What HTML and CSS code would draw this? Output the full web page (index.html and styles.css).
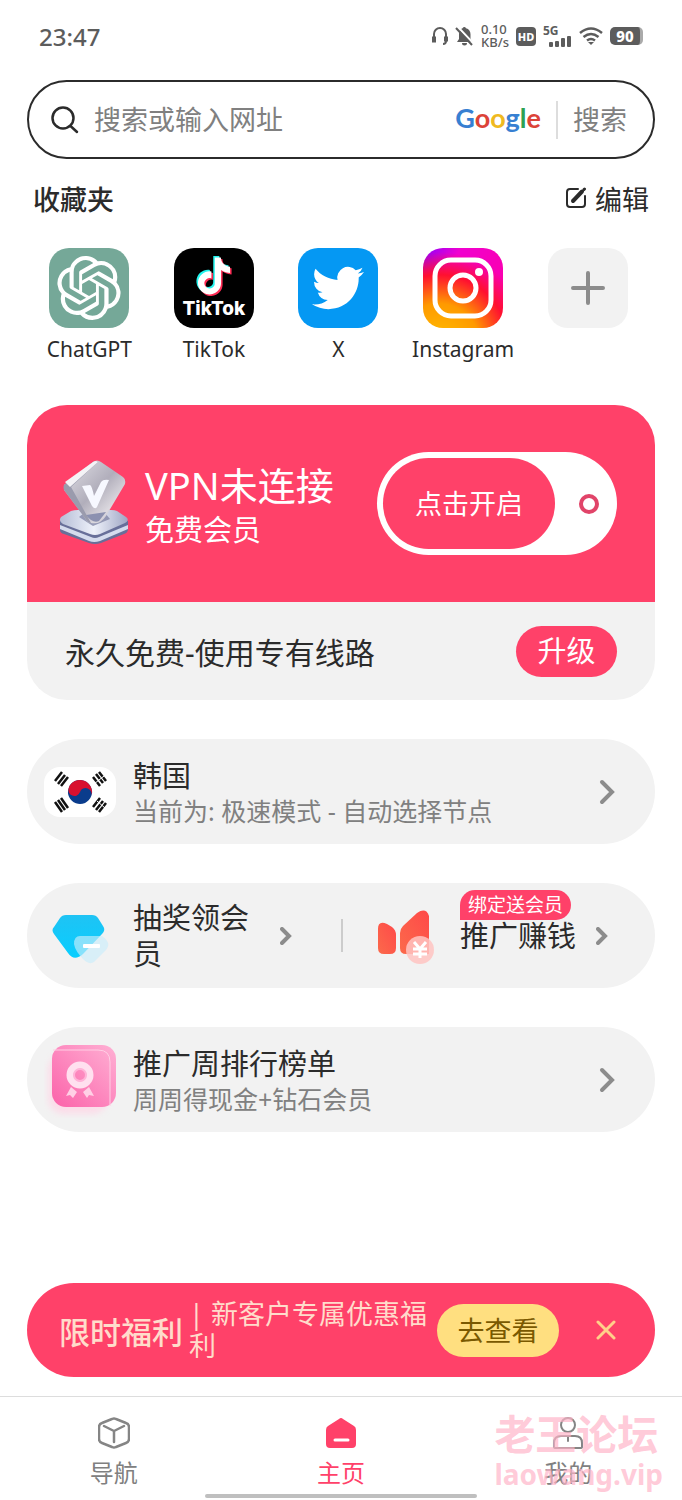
FILE: index.html
```
<!DOCTYPE html>
<html lang="zh-CN">
<head>
    <meta charset="utf-8" />
    <meta name="viewport" content="width=device-width, initial-scale=1" />
    <title>主页</title>
    <link rel="stylesheet" href="styles.css">
</head>
<body>
    <header class="status">
        <span class="clock">23:47</span>
        <div class="status-icons">
            <svg width="16" height="20" viewBox="0 0 16 20" fill="none" stroke="#5c5c5c" stroke-width="2">
                <path d="M2 15V8a6 6 0 0 1 12 0v7q0 3-3 3" />
                <path d="M2 10.500v6M14 10.500v5" stroke-width="4" />
            </svg>
            <svg width="19" height="20" viewBox="0 0 19 20">
                <path d="M9 1a2 2 0 0 1 2 1.200c3 .8 4.500 3 4.500 6V13l2 3H2l2-3V8c0-3 1.500-5 3.500-5.800A2 2 0 0 1 9 1zM7 17h5a2.500 2.500 0 0 1-5 0z" fill="#5c5c5c" />
                <path d="M3 1l16 17" stroke="#fff" stroke-width="2" />
                <path d="M1 2l16 17" stroke="#5c5c5c" stroke-width="2" />
            </svg>
            <div class="speed"><span>0.10</span><span>KB/s</span></div>
            <span class="hd">HD</span>
            <div class="signal">
                <span>5G</span>
                <svg width="24" height="12" viewBox="0 0 24 12" fill="#5c5c5c">
                    <rect x="1" y="7" width="4" height="5" rx="1" /><rect x="7" y="6" width="4" height="6" rx="1" />
                    <rect x="13" y="3" width="4" height="9" rx="1" /><rect x="19" y="1" width="4" height="11" rx="1" />
                </svg>
            </div>
            <svg width="24" height="20" viewBox="0 0 24 20" fill="none" stroke="#5c5c5c" stroke-width="2.500">
                <path d="M1 7q11-9 22 0M4.500 11q7.500-6 15 0M8 14.500q4-3 8 0" />
                <path d="M9 16h6l-3 3z" fill="#5c5c5c" stroke="none" />
            </svg>
            <div class="battery"><span>90</span></div>
        </div>
    </header>

    <main class="page">
        <form class="search">
            <svg width="28" height="28" viewBox="0 0 28 28" fill="none" stroke="#2b2b2b" stroke-width="2.500" stroke-linecap="round">
                <circle cx="12" cy="12" r="10.500" /><path d="M19.500 20l6.500 6" />
            </svg>
            <input type="text" aria-label="搜索" placeholder="搜索或输入网址" />
            <span class="google"><b class="blue">G</b><b class="red">o</b><b class="yellow">o</b><b class="blue">g</b><b class="green">l</b><b class="red">e</b></span>
            <button type="button" class="search-btn">搜索</button>
        </form>

        <section class="fav">
            <div class="fav-head">
                <h2>收藏夹</h2>
                <button type="button" class="edit">
                    <svg width="22" height="22" viewBox="0 0 22 22" fill="none" stroke="#2b2b2b" stroke-width="2" stroke-linecap="round">
                        <path d="M13 2H5a3 3 0 0 0-3 3v12a3 3 0 0 0 3 3h12a3 3 0 0 0 3-3V9" />
                        <path d="M8 14l9-9.500" stroke-width="4" /><path d="M19 2.500l.5-.5" stroke-width="3" />
                    </svg>
                    编辑
                </button>
            </div>
            <div class="fav-list">
                <a href="#" class="app">
                    <span class="app-icon chatgpt">
                        <svg width="64" height="64" viewBox="0 0 24 24" fill="#fff"><path d="M22.2819 9.8211a5.9847 5.9847 0 0 0-.5157-4.9108 6.0462 6.0462 0 0 0-6.5098-2.9A6.0651 6.0651 0 0 0 4.9807 4.1818a5.9847 5.9847 0 0 0-3.9977 2.9 6.0462 6.0462 0 0 0 .7427 7.0966 5.98 5.98 0 0 0 .511 4.9107 6.051 6.051 0 0 0 6.5146 2.9001A5.9847 5.9847 0 0 0 13.2599 24a6.0557 6.0557 0 0 0 5.7718-4.2058 5.9894 5.9894 0 0 0 3.9977-2.9001 6.0557 6.0557 0 0 0-.7475-7.0729zm-9.022 12.6081a4.4755 4.4755 0 0 1-2.8764-1.0408l.1419-.0804 4.7783-2.7582a.7948.7948 0 0 0 .3927-.6813v-6.7369l2.02 1.1686a.071.071 0 0 1 .038.052v5.5826a4.504 4.504 0 0 1-4.4945 4.4944zm-9.6607-4.1254a4.4708 4.4708 0 0 1-.5346-3.0137l.142.0852 4.783 2.7582a.7712.7712 0 0 0 .7806 0l5.8428-3.3685v2.3324a.0804.0804 0 0 1-.0332.0615L9.74 19.9502a4.4992 4.4992 0 0 1-6.1408-1.6464zM2.3408 7.8956a4.485 4.485 0 0 1 2.3655-1.9728V11.6a.7664.7664 0 0 0 .3879.6765l5.8144 3.3543-2.0201 1.1685a.0757.0757 0 0 1-.071 0l-4.8303-2.7865A4.504 4.504 0 0 1 2.3408 7.872zm16.5963 3.8558L13.1038 8.364 15.1192 7.2a.0757.0757 0 0 1 .071 0l4.8303 2.7913a4.4944 4.4944 0 0 1-.6765 8.1042v-5.6772a.79.79 0 0 0-.407-.667zm2.0107-3.0231l-.142-.0852-4.7735-2.7818a.7759.7759 0 0 0-.7854 0L9.409 9.2297V6.8974a.0662.0662 0 0 1 .0284-.0615l4.8303-2.7866a4.4992 4.4992 0 0 1 6.6802 4.66zM8.3065 12.863l-2.02-1.1638a.0804.0804 0 0 1-.038-.0567V6.0742a4.4992 4.4992 0 0 1 7.3757-3.4537l-.142.0805L8.704 5.459a.7948.7948 0 0 0-.3927.6813zm1.0976-2.3654l2.602-1.4998 2.6069 1.4998v2.9994l-2.5974 1.4997-2.6067-1.4997Z" /></svg>
                    </span>
                    <span>ChatGPT</span>
                </a>
                <a href="#" class="app">
                    <span class="app-icon tiktok">
                        <svg width="40" height="42" viewBox="-1 -1 26 26">
                            <defs><path id="note" d="M12.525.02c1.310-.02 2.610-.01 3.910-.02.080 1.530.630 3.090 1.750 4.170 1.120 1.110 2.700 1.620 4.240 1.790v4.030c-1.440-.050-2.890-.350-4.200-.970-.570-.260-1.100-.590-1.620-.930-.010 2.920.010 5.840-.020 8.750-.080 1.400-.540 2.790-1.350 3.940-1.310 1.920-3.580 3.170-5.910 3.210-1.430.080-2.860-.310-4.080-1.030-2.020-1.190-3.440-3.370-3.650-5.710-.020-.500-.030-1-.010-1.490.180-1.900 1.120-3.720 2.580-4.960 1.660-1.440 3.980-2.130 6.150-1.720.020 1.480-.040 2.960-.040 4.440-.990-.320-2.150-.230-3.020.370-.630.410-1.110 1.040-1.360 1.750-.210.510-.150 1.070-.140 1.610.240 1.640 1.820 3.020 3.500 2.870 1.120-.010 2.190-.660 2.770-1.610.190-.330.400-.670.410-1.060.100-1.790.060-3.570.070-5.360.010-4.030-.010-8.050.020-12.070z" /></defs>
                            <use href="#note" x="-1" y="-1" fill="#25f4ee" /><use href="#note" x="1" y="1" fill="#fe2c55" /><use href="#note" fill="#fff" />
                        </svg>
                        <b>TikTok</b>
                    </span>
                    <span>TikTok</span>
                </a>
                <a href="#" class="app">
                    <span class="app-icon twitter">
                        <svg width="52" height="52" viewBox="0 0 24 24" fill="#fff"><path d="M23.953 4.570a10 10 0 0 1-2.825.775 4.958 4.958 0 0 0 2.163-2.723c-.951.555-2.005.959-3.127 1.184a4.920 4.920 0 0 0-8.384 4.482C7.690 8.095 4.067 6.130 1.640 3.162a4.822 4.822 0 0 0-.666 2.475c0 1.710.870 3.213 2.188 4.096a4.904 4.904 0 0 1-2.228-.616v.060a4.923 4.923 0 0 0 3.946 4.827 4.996 4.996 0 0 1-2.212.085 4.936 4.936 0 0 0 4.604 3.417 9.867 9.867 0 0 1-6.102 2.105c-.390 0-.779-.023-1.170-.067a13.995 13.995 0 0 0 7.557 2.209c9.053 0 13.998-7.496 13.998-13.985 0-.210 0-.420-.015-.630A9.935 9.935 0 0 0 24 4.590z" /></svg>
                    </span>
                    <span>X</span>
                </a>
                <a href="#" class="app">
                    <span class="app-icon instagram">
                        <svg width="64" height="64" viewBox="0 0 64 64" fill="none" stroke="#fff" stroke-width="5">
                            <rect x="4" y="4" width="56" height="56" rx="16" /><circle cx="32" cy="32" r="13" />
                            <circle cx="48" cy="16" r="4" fill="#fff" stroke="none" />
                        </svg>
                    </span>
                    <span>Instagram</span>
                </a>
                <button type="button" class="app" aria-label="添加">
                    <span class="app-icon add">
                        <svg width="34" height="34" viewBox="0 0 34 34" stroke="#8c8c8c" stroke-width="4" stroke-linecap="round"><path d="M17 2v30M2 17h30" /></svg>
                    </span>
                </button>
            </div>
        </section>

        <section class="vpn">
            <div class="vpn-top">
                <!-- 会员徽章 -->
                <svg class="vpn-badge" width="76" height="90" viewBox="0 0 76 90">
                    <defs>
                        <linearGradient id="gem" x1="0" y1="0" x2="1" y2="1">
                            <stop offset="0" stop-color="#e4e3e9" /><stop offset=".5" stop-color="#b1aebb" /><stop offset=".75" stop-color="#dcd9df" /><stop offset="1" stop-color="#8d8fac" />
                        </linearGradient>
                        <linearGradient id="base" x1="0" y1="0" x2="1" y2="0">
                            <stop offset="0" stop-color="#b5bdd6" /><stop offset=".5" stop-color="#eef1fa" /><stop offset="1" stop-color="#9fa6c4" />
                        </linearGradient>
                    </defs>
                    <path d="M1 62v9q0 3 4 4l25 9q6 2 12 0l23-9q4-1 4-5v-8z" fill="#686f99" />
                    <path d="M1 66l31 12q4 2 8 0l29-12v4L41 82q-6 2-11 0L1 70z" fill="#d5dbed" />
                    <path d="M2 58l10-6q3-1 7-1h33q4 0 6 1l9 6q4 3-1 6L41 75q-5 2-10 0L4 65q-5-3-2-7z" fill="url(#base)" />
                    <path d="M20 58l14 9 17-7-5-6H25z" fill="#767b9c" opacity=".7" />
                    <path d="M5 26L34 3q4-3 8 0l22 15q3 2 2 7L47 57q-6 9-15 7-4 0-6-5L5 31z" fill="url(#gem)" />
                    <path d="M5 26L34 3q3-2 5 0L12 28l20 36q-4 0-6-5L5 31q-1-3 0-5z" fill="#9a9bad" />
                    <path d="M6 23L34 3q3-2 5 0L11 28z" fill="#f4f3f6" />
                    <path d="M27 56l20-3-7 9q-6 3-13-6z" fill="#8c91b0" />
                    <path d="M23 27l8-1q2 1 4 11l7-14q2-3 8-2L38 48q-2 3-5-1z" fill="#f7f8ff" />
                </svg>
                <div class="vpn-info">
                    <h1>VPN未连接</h1>
                    <p>免费会员</p>
                </div>
                <button type="button" class="toggle"><span class="toggle-text">点击开启</span><span class="dot"></span></button>
            </div>
            <div class="vpn-bottom">
                <span>永久免费-使用专有线路</span>
                <button type="button" class="upgrade">升级</button>
            </div>
        </section>

        <a href="#" class="row">
            <span class="row-icon flag">
                <svg width="72" height="50" viewBox="0 0 72 50">
                    <g transform="rotate(20 36 25)">
                        <circle cx="36" cy="25" r="12" fill="#0a3c8c" />
                        <path d="M24 25a12 12 0 0 1 24 0 6 6 0 0 0-12 0 6 6 0 0 1-12 0z" fill="#d8102f" />
                    </g>
                    <g stroke="#111" stroke-width="2.500">
                        <path d="M11 14l7-9M14 17l7-9M17 19l7-9" />
                        <path d="M49 10l7 9M52 7l7 9M55 5l7 9M11 35l7 10M14 33l7 10M17 31l7 10M49 40l7-9M52 43l7-9M55 45l7-9" />
                    </g>
                    <g stroke="#fff" stroke-width="1"><path d="M50 17l10-8M53 34l8 7" /></g>
                </svg>
            </span>
            <span class="row-text">
                <span class="title">韩国</span>
                <span class="desc">当前为: 极速模式 - 自动选择节点</span>
            </span>
            <svg class="arrow" width="16" height="26" viewBox="0 0 16 26"><path d="M3 3l10 10L3 23" /></svg>
        </a>

        <div class="row double">
            <a href="#" class="half">
                <span class="row-icon">
                    <svg width="60" height="56" viewBox="0 0 60 56">
                        <defs>
                            <linearGradient id="cyan" x1="0" y1="0" x2="0" y2="1"><stop offset="0" stop-color="#1fc3f4" /><stop offset="1" stop-color="#08ceff" /></linearGradient>
                        </defs>
                        <path d="M10 10q2-3 6-3h26q4 0 6 3l5 8q3 4-1 8L33 46q-9 8-15-1L4 26q-3-4 0-7z" fill="url(#cyan)" />
                        <path d="M30 28h22q10 7 4 14L44 54q-5 3-10-2-9-9-10-16 0-8 6-8z" fill="#c9edfb" opacity=".65" />
                        <rect x="33" y="36" width="17" height="4" rx="1" fill="#fff" />
                    </svg>
                </span>
                <span class="title wrap">抽奖领会员</span>
                <svg class="arrow small" width="12" height="18" viewBox="0 0 12 18"><path d="M2 2l7 7-7 7" /></svg>
            </a>
            <a href="#" class="half promo">
                <svg width="58" height="56" viewBox="0 0 58 56">
                    <defs><linearGradient id="coral" x1="1" y1="0" x2="0" y2="1"><stop offset="0" stop-color="#ff4949" /><stop offset="1" stop-color="#fb6a4b" /></linearGradient></defs>
                    <path d="M1 21q0-9 9-5l5 3q4 3 4 8v13q0 6-6 6H7q-6 0-6-6z" fill="url(#coral)" />
                    <path d="M23 25q0-4 3-7L40 5q9-6 12 3v38H29q-6 0-6-6z" fill="url(#coral)" />
                    <circle cx="43" cy="42" r="14" fill="#ffc4c2" opacity=".85" />
                    <path d="M37 34l6 7 6-7M43 41v9M36 41h14M36 46h14" fill="none" stroke="#fff" stroke-width="3" />
                </svg>
                <span class="promo-text"><span class="tag">绑定送会员</span><span class="title">推广赚钱</span></span>
                <svg class="arrow small" width="12" height="18" viewBox="0 0 12 18"><path d="M2 2l7 7-7 7" /></svg>
            </a>
        </div>

        <a href="#" class="row">
            <span class="row-icon">
                <svg width="72" height="76" viewBox="0 0 72 76">
                    <defs>
                        <linearGradient id="pink" x1="1" y1="0" x2="0" y2="1"><stop offset="0" stop-color="#ffb0d4" /><stop offset="1" stop-color="#fb62a9" /></linearGradient>
                        <filter id="soft"><feGaussianBlur stdDeviation="3" /></filter>
                    </defs>
                    <rect x="4" y="12" width="60" height="60" rx="16" fill="#ffd4e5" opacity=".7" filter="url(#soft)" />
                    <rect x="8" y="3" width="64" height="62" rx="14" fill="url(#pink)" />
                    <path d="M9 8h45q12 0 12 12v44" fill="none" stroke="#ffcee4" stroke-width="1" />
                    <circle cx="36" cy="33" r="10" fill="none" stroke="#ffe0ef" stroke-width="7" />
                    <circle cx="36" cy="33" r="6" fill="none" stroke="#ffb4d8" stroke-width="2" />
                    <path d="M27 45l6 5-4 6-3-3-4 1zM45 45l-6 5 4 6 2-3 5 1z" fill="#ffd0e5" />
                </svg>
            </span>
            <span class="row-text">
                <span class="title">推广周排行榜单</span>
                <span class="desc">周周得现金+钻石会员</span>
            </span>
            <svg class="arrow" width="16" height="26" viewBox="0 0 16 26"><path d="M3 3l10 10L3 23" /></svg>
        </a>

        <aside class="banner">
            <strong>限时福利</strong>
            <p>| 新客户专属优惠福利</p>
            <button type="button" class="look">去查看</button>
            <button type="button" class="close" aria-label="关闭">
                <svg width="20" height="20" viewBox="0 0 20 20" stroke="#ffd08a" stroke-width="3" stroke-linecap="round"><path d="M2 2l16 16M18 2L2 18" /></svg>
            </button>
        </aside>
    </main>

    <nav class="tabs">
        <a href="#">
            <svg width="32" height="32" viewBox="0 0 32 32" fill="none" stroke="#858585" stroke-width="2.500" stroke-linejoin="round" stroke-linecap="round">
                <path d="M14 2q2-1 4 0l10 4q3 1 3 4v12q0 3-3 4l-10 4q-2 1-4 0L4 26q-3-1-3-4V10q0-3 3-4z" /><path d="M6 9l10 5 10-5M16 14v11" />
            </svg>
            导航
        </a>
        <a href="#" class="active">
            <svg width="32" height="32" viewBox="0 0 32 32"><path d="M14 2q2-2 4 0l11 7q2 1 2 4v14q0 4-4 4H5q-4 0-4-4V13q0-3 2-4z" fill="#ff4169" /><path d="M10 23h13" stroke="#fff" stroke-width="3" stroke-linecap="round" /></svg>
            主页
        </a>
        <a href="#">
            <svg width="32" height="32" viewBox="0 0 32 32" fill="none" stroke="#858585" stroke-width="2" stroke-linecap="round">
                <circle cx="16" cy="8" r="7" /><path d="M9 19h14q7 0 7 7v4q0 1-2 1H4q-2 0-2-1v-4q0-7 7-7zM16 20v4" />
            </svg>
            我的
        </a>
        <div class="watermark"><span>老王论坛</span><small>laowang.vip</small></div>
        <div class="home-bar"></div>
    </nav>
</body>
</html>
```

FILE: styles.css
```
* {
    box-sizing: border-box;
}

body {
    margin: 0;
    min-height: 100vh;
    display: flex;
    flex-direction: column;
    background-color: #fff;
    color: #2b2b2b;
    font-family: "Noto Sans", "Noto Sans CJK SC", sans-serif;
}

h1, h2, p {
    margin: 0;
    font-weight: 400;
}

a {
    color: inherit;
    text-decoration: none;
}

button, input {
    border: 0;
    padding: 0;
    background: none;
    color: inherit;
    font-family: inherit;
}

button {
    cursor: pointer;
}

svg {
    display: block;
    flex: none;
}

/* 状态栏 */
.status {
    height: 72px;
    padding: 0 39px;
    display: flex;
    align-items: center;
    justify-content: space-between;
    color: #5c5c5c;
}

.clock {
    font-size: 24px;
    font-weight: 500;
}

.status-icons {
    display: flex;
    align-items: center;
    gap: 7px;
}

.speed {
    display: flex;
    flex-direction: column;
    font-size: 13px;
    line-height: 13px;
    font-weight: 500;
}

.hd {
    width: 20px;
    height: 19px;
    border-radius: 4px;
    background-color: #5c5c5c;
    color: #fff;
    font-size: 11px;
    line-height: 19px;
    font-weight: 800;
    text-align: center;
}

.signal {
    display: flex;
    flex-direction: column;
    width: 29px;
    font-size: 12px;
    line-height: 9px;
    font-weight: 700;
}

    .signal svg {
        align-self: flex-end;
    }

.battery {
    width: 33px;
    height: 18px;
    border-right: 3px solid #aaa;
    border-radius: 5px;
    background-color: #5c5c5c;
    color: #fff;
    font-size: 15px;
    line-height: 18px;
    font-weight: 800;
    text-align: center;
}

.page {
    flex: 1;
    display: flex;
    flex-direction: column;
    padding: 8px 27px 19px;
}

/* 搜索框 */
.search {
    display: flex;
    align-items: center;
    height: 79px;
    padding: 0 26px 0 22px;
    border: 2px solid #2b2b2b;
    border-radius: 40px;
    font-size: 27px;
}

    .search input {
        flex: 1;
        min-width: 0;
        margin-left: 15px;
        font-size: inherit;
        outline: none;
    }

        .search input::placeholder {
            color: #808080;
            opacity: 1;
        }

.google {
    margin-right: 15px;
    padding-bottom: 4px;
    font-family: Lato, sans-serif;
    font-size: 27px;
    line-height: 36px;
}

    .google b {
        font-weight: 700;
    }

.blue { color: #3780d2; }
.red { color: #dc4338; }
.yellow { color: #efb920; }
.green { color: #2da152; }

.search-btn {
    padding-left: 15px;
    border-left: 2px solid #ddd;
    color: #808080;
    font-size: 27px;
    line-height: 38px;
}

/* 收藏夹 */
.fav-head {
    display: flex;
    align-items: center;
    justify-content: space-between;
    height: 78px;
    padding: 0 6px;
}

    .fav-head h2 {
        font-size: 27px;
        font-weight: 500;
    }

.edit {
    display: flex;
    align-items: center;
    gap: 8px;
    font-size: 27px;
}

.fav-list {
    display: grid;
    grid-template-columns: repeat(5, 1fr);
    margin: 11px 5px 0 0;
}

.app {
    display: flex;
    flex-direction: column;
    align-items: center;
    font-size: 21px;
    line-height: 42px;
}

.app-icon {
    width: 80px;
    height: 80px;
    border-radius: 20px;
    display: flex;
    flex-direction: column;
    align-items: center;
    justify-content: center;
    overflow: hidden;
}

.chatgpt { background-color: #75a898; }
.twitter { background-color: #0598f3; }
.add { background-color: #f2f2f2; }

.tiktok {
    background-color: #000;
    color: #fff;
}

    .tiktok b {
        font-family: Inter, sans-serif;
        font-size: 19px;
        font-weight: 800;
        line-height: 24px;
    }

.instagram {
    background: radial-gradient(circle at 20% 120%, #ffc000 0, #ff9a00 35%, #ff1030 60%, transparent 80%), linear-gradient(120deg, #8a00ff 0, #f000d0 30%, #ff00a0 100%);
}

/* VPN 卡片 */
.vpn {
    margin-top: 35px;
    border-radius: 40px;
    overflow: hidden;
    background-color: #f2f2f2;
}

.vpn-top {
    display: flex;
    align-items: center;
    min-height: 197px;
    padding: 0 38px 0 32px;
    background-color: #ff4169;
    color: #fff;
}

.vpn-info {
    flex: 1;
    margin-left: 10px;
    padding-top: 6px;
}

    .vpn-info h1 {
        font-size: 38px;
        line-height: 46px;
    }

    .vpn-info p {
        font-size: 29px;
        line-height: 44px;
    }

.toggle {
    display: flex;
    align-items: center;
    width: 240px;
    height: 103px;
    padding: 6px;
    border-radius: 52px;
    background-color: #fff;
}

.toggle-text {
    width: 172px;
    height: 91px;
    border-radius: 46px;
    background-color: #ff4169;
    color: #fff;
    font-size: 27px;
    line-height: 91px;
}

.dot {
    width: 20px;
    height: 20px;
    margin-left: 24px;
    border: 4px solid #e14469;
    border-radius: 50%;
}

.vpn-bottom {
    display: flex;
    align-items: center;
    justify-content: space-between;
    min-height: 98px;
    padding: 0 38px;
    font-size: 30px;
}

.upgrade {
    width: 101px;
    height: 51px;
    border-radius: 26px;
    background-color: #ff4169;
    color: #fff;
    font-size: 29px;
    line-height: 48px;
}

/* 列表 */
.row {
    display: flex;
    align-items: center;
    min-height: 105px;
    margin-top: 39px;
    padding: 0 40px 0 17px;
    border-radius: 53px;
    background-color: #f2f2f2;
}

.row-icon {
    display: flex;
    justify-content: center;
    flex: none;
    width: 72px;
    margin-right: 17px;
}

.flag {
    border-radius: 16px;
    background-color: #fff;
}

.row-text {
    flex: 1;
    display: flex;
    flex-direction: column;
    padding-top: 3px;
}

.title {
    font-size: 29px;
    line-height: 36px;
}

.desc {
    color: #808080;
    font-size: 25px;
    line-height: 34px;
}

.arrow {
    fill: none;
    stroke: #8c8c8c;
    stroke-width: 4px;
    stroke-linecap: round;
}

.half {
    flex: 1;
    display: flex;
    align-items: center;
}

.double {
    padding-right: 47px;
}

.wrap {
    width: 120px;
    margin-right: 27px;
}

.promo {
    flex: none;
    padding-left: 36px;
    background: linear-gradient(#ccc, #ccc) no-repeat left center / 2px 33px;
}

.promo-text {
    position: relative;
    margin: 0 20px 0 25px;
}

.tag {
    position: absolute;
    left: 0;
    bottom: 34px;
    padding: 0 8px;
    border-radius: 15px 15px 15px 0;
    background-color: #ff4169;
    color: #fff;
    font-size: 19px;
    line-height: 30px;
    white-space: nowrap;
}

/* 底部活动 */
.banner {
    display: flex;
    align-items: center;
    min-height: 94px;
    margin-top: auto;
    padding: 0 39px 0 32px;
    border-radius: 47px;
    background-color: #ff4169;
    color: #ffdccb;
}

    .banner strong {
        flex: none;
        font-size: 31px;
        font-weight: 500;
    }

    .banner p {
        flex: 1;
        margin-left: 6px;
        font-size: 27px;
        line-height: 32px;
    }

.look {
    flex: none;
    width: 122px;
    height: 53px;
    border-radius: 27px;
    background-color: #ffdf80;
    color: #7a5900;
    font-size: 27px;
    line-height: 53px;
}

.close {
    margin-left: 37px;
}

/* 底部导航 */
.tabs {
    position: relative;
    display: grid;
    grid-template-columns: repeat(3, 1fr);
    height: 104px;
    border-top: 1px solid #ddd;
    color: #808080;
    font-size: 24px;
    line-height: 34px;
}

    .tabs a {
        display: flex;
        flex-direction: column;
        align-items: center;
        gap: 7px;
        padding-top: 20px;
    }

    .tabs .active {
        color: #ff4169;
    }

.watermark {
    position: absolute;
    right: 19px;
    top: 14px;
    display: flex;
    flex-direction: column;
    color: rgba(255, 180, 200, 0.7);
    font-size: 41px;
    line-height: 46px;
    font-weight: 700;
    pointer-events: none;
}

    .watermark small {
        font-size: 28px;
        line-height: 34px;
    }

.home-bar {
    position: absolute;
    left: 30%;
    right: 30%;
    bottom: 2px;
    height: 4px;
    border-radius: 2px;
    background-color: #bfbfbf;
}
```
